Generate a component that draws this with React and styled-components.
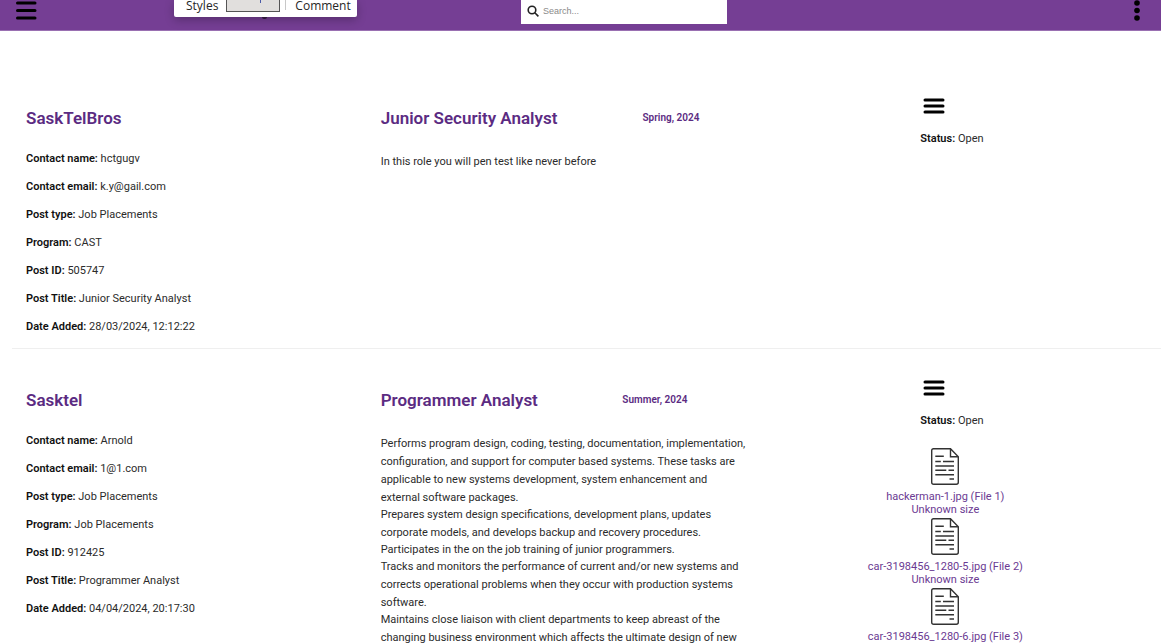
import React from "react";
import styled, { createGlobalStyle } from "styled-components";

const Global = createGlobalStyle`
  * { box-sizing: border-box; }
  body { margin: 0; background: #fff; color: #2b2b2b; font: 11px/18px Roboto, sans-serif; overflow-x: hidden; scrollbar-width: none; }
  h1, h2, p, ul { margin: 0; padding: 0; }
  button { border: 0; padding: 0; background: none; font: inherit; color: inherit; }
`;

const TopBar = styled.header`
  position: relative;
  display: grid;
  grid-template-columns: 505fr 206px 416fr;
  align-items: start;
  height: 31px;
  padding: 0 17px 0 15px;
  background: #753e94;
  border-bottom: 1px solid #9a70b2;
`;

const IconButton = styled.button`
  display: block;
  justify-self: ${(p) => p.$align || "start"};
  svg { display: block; }
`;

const SearchBox = styled.label`
  display: flex;
  align-items: center;
  gap: 4px;
  height: 24px;
  padding: 0 6px 2px;
  background: #fff;
`;

const SearchInput = styled.input`
  flex: 1;
  min-width: 0;
  border: 0;
  padding: 0;
  outline: 0;
  background: transparent;
  font: 9px "Liberation Sans", sans-serif;
  &::placeholder { color: #8a8a8a; opacity: 1; }
`;

const Popup = styled.div`
  position: absolute;
  top: 0;
  left: 174px;
  display: flex;
  align-items: flex-start;
  height: 17px;
  padding: 0 6px 0 12px;
  background: #fff;
  border-radius: 0 0 2px 2px;
  box-shadow: 0 3px 10px rgba(0, 0, 0, 0.25);
  font: 12px/12px "Open Sans", sans-serif;
  color: #262626;
  &::after {
    content: "";
    position: absolute;
    top: 17px;
    left: 88px;
    width: 5px;
    height: 2px;
    border-radius: 0 0 3px 3px;
    background: #2b1838;
  }
`;

const PopupItem = styled.button`
  line-height: 12px;
`;

const PopupSelected = styled.button`
  display: flex;
  flex: none;
  width: 54px;
  height: 12px;
  margin: 0 5px 0 8px;
  padding-left: 33px;
  background: #e1dfdd;
  border: 1px solid #555;
  border-top: 0;
  &::before {
    content: "";
    width: 1px;
    height: 3px;
    background: #4a5aa8;
  }
`;

const PopupDivider = styled.span`
  width: 1px;
  height: 10px;
  margin-right: 9px;
  background: #c8c8c8;
`;

const Posts = styled.main`
  padding: 67px 0 0 12px;
`;

const Post = styled.article`
  display: grid;
  grid-template-columns: 355fr 375fr 406fr;
  padding: 0 0 7px 14px;
  & + & { border-top: 1px solid #efefef; padding-top: 31px; }
`;

const Column = styled.section`
  min-width: 0;
  padding-top: 8px;
`;

const Title = styled.h2`
  font-size: 17px;
  line-height: 24px;
  font-weight: 600;
  color: #5b2b82;
`;

const Details = styled.ul`
  list-style: none;
  margin-top: 15px;
  line-height: 28px;
`;

const Label = styled.strong`
  font-weight: 600;
  color: #111;
`;

const Heading = styled.div`
  display: flex;
  justify-content: space-between;
  align-items: center;
  padding-right: ${(p) => p.$inset}px;
`;

const Term = styled.span`
  font-size: 10px;
  font-weight: 600;
  color: #5b2b82;
`;

const Description = styled.div`
  margin-top: 23px;
  padding-right: 8px;
  p + p { margin-top: -1px; }
`;

const Aside = styled.section`
  width: 156px;
  margin-left: 112px;
`;

const Controls = styled.div`
  display: flex;
  flex-direction: column;
  align-items: flex-start;
  gap: 16px;
  padding-left: 53px;
  button { margin-left: 3px; }
`;

const Files = styled.ul`
  list-style: none;
  display: flex;
  flex-direction: column;
  gap: 2px;
  margin-top: 18px;
`;

const FileLink = styled.a`
  display: flex;
  flex-direction: column;
  align-items: center;
  line-height: 13px;
  color: #6b3a92;
  text-decoration: none;
  white-space: nowrap;
  svg { display: block; margin-bottom: 5px; }
`;

const HeaderBars = () => (
  <svg width="22" height="21" viewBox="0 0 22 21" stroke="#000" strokeWidth="3" strokeLinecap="round">
    <path d="M2.500 3h17.500M2.500 10.500h17.500M2.500 18h17.500" />
  </svg>
);

const PostBars = () => (
  <svg width="22" height="16" viewBox="0 0 22 16" stroke="#000" strokeWidth="3" strokeLinecap="round">
    <path d="M2 2h18M2 8h18M2 14h18" />
  </svg>
);

const FileIcon = () => (
  <svg width="28" height="37" viewBox="0 0 28 37" fill="none" stroke="#333" strokeWidth="1.400">
    <path d="M2.500 .7h17l7.800 8v25.500q0 2-2 2H2.700q-2 0-2-2V2.700q0-2 1.800-2zM19.500 .7v8h7.800" />
    <path d="M4.300 8.300h8.500M4.300 13.500h5.500M12 13.500h11M4.300 18h18.700M4.300 22.300h11M17.500 22.300h5.500M4.300 26.700h18.700M18.500 31h4.500" />
  </svg>
);

const posts = [
  {
    company: "SaskTelBros",
    title: "Junior Security Analyst",
    term: "Spring, 2024",
    inset: 56,
    details: [
      ["Contact name", "hctgugv"],
      ["Contact email", "k.y@gail.com"],
      ["Post type", "Job Placements"],
      ["Program", "CAST"],
      ["Post ID", "505747"],
      ["Post Title", "Junior Security Analyst"],
      ["Date Added", "28/03/2024, 12:12:22"],
    ],
    text: ["In this role you will pen test like never before"],
    files: [],
  },
  {
    company: "Sasktel",
    title: "Programmer Analyst",
    term: "Summer, 2024",
    inset: 68,
    details: [
      ["Contact name", "Arnold"],
      ["Contact email", "1@1.com"],
      ["Post type", "Job Placements"],
      ["Program", "Job Placements"],
      ["Post ID", "912425"],
      ["Post Title", "Programmer Analyst"],
      ["Date Added", "04/04/2024, 20:17:30"],
    ],
    text: [
      "Performs program design, coding, testing, documentation, implementation, configuration, and support for computer based systems. These tasks are applicable to new systems development, system enhancement and external software packages.",
      "Prepares system design specifications, development plans, updates corporate models, and develops backup and recovery procedures.",
      "Participates in the on the job training of junior programmers.",
      "Tracks and monitors the performance of current and/or new systems and corrects operational problems when they occur with production systems software.",
      "Maintains close liaison with client departments to keep abreast of the changing business environment which affects the ultimate design of new",
    ],
    files: ["hackerman-1.jpg", "car-3198456_1280-5.jpg", "car-3198456_1280-6.jpg"],
  },
];

export default function App() {
  return (
    <>
      <Global />
      <TopBar>
        <IconButton aria-label="Menu"><HeaderBars /></IconButton>
        <SearchBox>
          <svg width="12" height="12" viewBox="0 0 12 12" fill="none" stroke="#222" strokeWidth="1.600">
            <circle cx="5" cy="5" r="3.800" /><path d="M7.800 7.800l3.600 3.600" />
          </svg>
          <SearchInput type="text" aria-label="Search" placeholder="Search..." />
        </SearchBox>
        <IconButton $align="end" aria-label="More">
          <svg width="14" height="22" viewBox="0 0 14 22"><circle cx="7" cy="3" r="2.800" /><circle cx="7" cy="10.500" r="2.800" /><circle cx="7" cy="18" r="2.800" /></svg>
        </IconButton>
        <Popup>
          <PopupItem>Styles</PopupItem>
          <PopupSelected aria-label="Selected tool" />
          <PopupDivider />
          <PopupItem>Comment</PopupItem>
        </Popup>
      </TopBar>
      <Posts>
        {posts.map((post) => (
          <Post key={post.company}>
            <Column>
              <Title>{post.company}</Title>
              <Details>
                {post.details.map(([k, v]) => (
                  <li key={k}><Label>{k}:</Label> {v}</li>
                ))}
              </Details>
            </Column>
            <Column>
              <Heading $inset={post.inset}>
                <Title>{post.title}</Title>
                <Term>{post.term}</Term>
              </Heading>
              <Description>{post.text.map((t) => <p key={t}>{t}</p>)}</Description>
            </Column>
            <Aside>
              <Controls>
                <IconButton aria-label="Post menu"><PostBars /></IconButton>
                <p><Label>Status:</Label> Open</p>
              </Controls>
              {post.files.length > 0 && (
                <Files>
                  {post.files.map((name, i) => (
                    <li key={name}>
                      <FileLink href="#">
                        <FileIcon />
                        <span>{name} (File {i + 1})</span>
                        <span>Unknown size</span>
                      </FileLink>
                    </li>
                  ))}
                </Files>
              )}
            </Aside>
          </Post>
        ))}
      </Posts>
    </>
  );
}
